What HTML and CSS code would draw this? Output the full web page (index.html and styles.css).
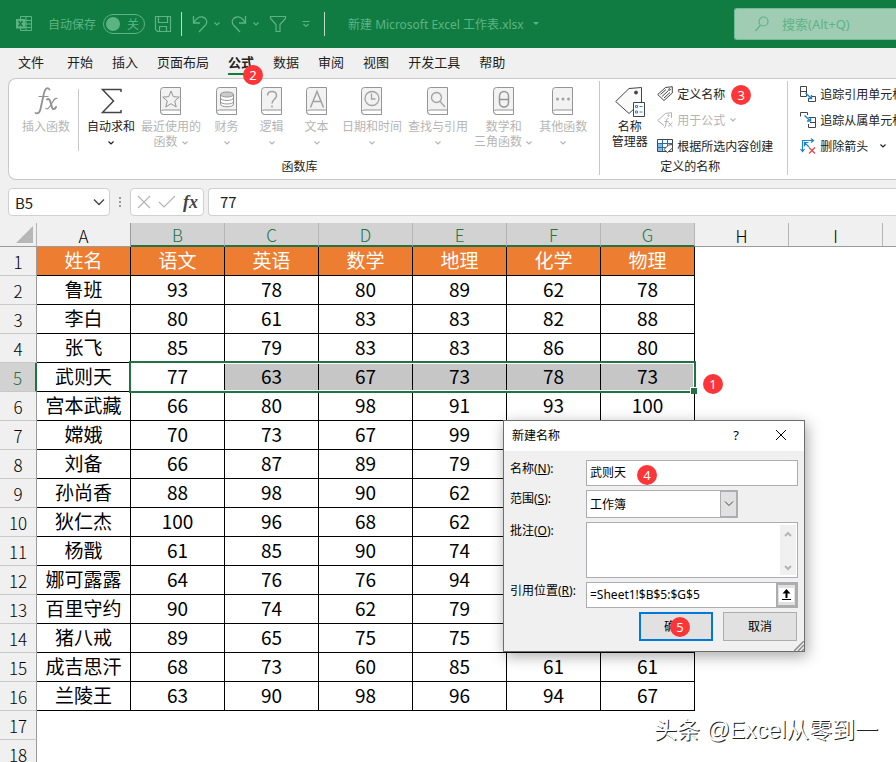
FILE: index.html
```html
<!DOCTYPE html>
<html lang="zh-CN">
<head>
    <meta charset="UTF-8">
    <meta name="viewport" content="width=device-width, initial-scale=1.0">
    <title>新建 Microsoft Excel 工作表.xlsx</title>
    <link rel="stylesheet" href="styles.css">
</head>
<body>
    <svg class="defs" aria-hidden="true">
        <symbol id="book" viewBox="0 0 22 28">
            <path d="M3.5.5h17v27h-17a3 3 0 0 1-3-3v-21a3 3 0 0 1 3-3z" fill="#f2f2f2" stroke="#959595"/>
            <path d="M.7 24.5a3 3 0 0 1 2.800-1.500h17v4.500h-17a3 3 0 0 1-2.800-3z" fill="#fff" stroke="#959595"/>
        </symbol>
        <symbol id="chevron" viewBox="0 0 8 6">
            <path d="M1.500 1.500 4 4l2.500-2.500" fill="none" stroke="currentColor" stroke-width="1.200"/>
        </symbol>
    </svg>

    <div class="app">
        <header class="titlebar">
            <svg class="app-icon" width="17" height="18" viewBox="0 0 17 18" fill="none" stroke="currentColor">
                <path d="M4.500 4V1.500h11v14h-11V13M10 1.500v14M4.500 5.500h11M9 9h6.500M4.500 12.500h11"/>
                <path d="M0 4h9v9.500H0z" fill="currentColor" stroke="none"/>
                <path d="M2.500 6l4 5.500M6.500 6l-4 5.500" stroke="#107c41" stroke-width="1.400"/>
            </svg>
            <span class="autosave">自动保存</span>
            <button class="toggle" aria-label="自动保存"><span class="knob"></span>关</button>
            <button class="tool save" aria-label="保存">
                <svg width="18" height="18" viewBox="0 0 18 18" fill="none" stroke="currentColor" stroke-width="1.200"><path d="M1.500 1.500h15v15H3.500l-2-2zM4.500 1.500v6h9v-6M5.500 16.500v-5h7v5"/></svg>
            </button>
            <span class="bar-line"></span>
            <button class="tool undo" aria-label="撤消">
                <svg width="16" height="18" viewBox="0 0 16 18" fill="none" stroke="currentColor" stroke-width="1.300"><path d="M1.500 1v7H8M2 7.500C4 4 7 1.500 10.500 2c4 .7 5.500 5 3 8L7 17"/></svg>
                <svg width="8" height="6"><use href="#chevron"/></svg>
            </button>
            <button class="tool redo" aria-label="恢复">
                <svg width="16" height="18" viewBox="0 0 16 18" fill="none" stroke="currentColor" stroke-width="1.300"><path d="M14.500 1v7H8M14 7.500C12 4 9 1.500 5.500 2c-4 .7-5.500 5-3 8L9 17"/></svg>
                <svg width="8" height="6"><use href="#chevron"/></svg>
            </button>
            <button class="tool filter" aria-label="筛选">
                <svg width="18" height="18" viewBox="0 0 18 18" fill="none" stroke="currentColor" stroke-width="1.200"><path d="M1.500 1.500h15v2L11 9.500v7H7v-7L1.500 3.500z"/></svg>
            </button>
            <button class="tool more" aria-label="自定义快速访问工具栏">
                <svg width="8" height="8" viewBox="0 0 8 8" fill="none" stroke="currentColor" stroke-width="1.200"><path d="M.5 1.500h7M1.500 4 4 6.500 6.500 4"/></svg>
            </button>
            <span class="bar-line"></span>
            <button class="doc-title">新建 Microsoft Excel 工作表.xlsx <svg width="6" height="4"><path d="M0 0h6L3 3z" fill="currentColor"/></svg></button>
            <label class="search">
                <svg width="14" height="16" viewBox="0 0 14 16" fill="none" stroke="currentColor" stroke-width="1.200"><circle cx="8.500" cy="5.500" r="4.500"/><path d="M5.500 9 .5 15"/></svg>
                <input type="text" placeholder="搜索(Alt+Q)" aria-label="搜索">
            </label>
        </header>

        <nav class="tabs">
            <a href="#" class="file">文件</a>
            <a href="#">开始</a>
            <a href="#">插入</a>
            <a href="#">页面布局</a>
            <a href="#" class="active">公式<span class="badge badge-2">2</span></a>
            <a href="#">数据</a>
            <a href="#">审阅</a>
            <a href="#">视图</a>
            <a href="#">开发工具</a>
            <a href="#">帮助</a>
        </nav>

        <section class="ribbon">
            <div class="group library-group">
                <div class="group-body">
                    <div class="insert">
                        <button class="big" disabled>
                            <svg class="icon" width="26" height="28" viewBox="0 0 26 28" fill="none" stroke="#929292" stroke-linecap="round">
                                <path d="M16.500 2.500C14.500-.2 12 1.500 11 6L7.500 22c-.8 3.500-2.500 5-5 4" stroke-width="1.800"/>
                                <path d="M6 9.500h9" stroke-width="1.200"/>
                                <path d="M14 12.500c4-3 4 9 6 9.500 1.200.3 2.500-1 3-2" stroke-width="2"/>
                                <path d="M24 11.500c-2-1-3 1-5 4.500s-4 7-6 5.500" stroke-width="1.200"/>
                            </svg>
                            <span>插入函数</span>
                        </button>
                    </div>
                    <button class="big">
                        <svg class="icon" width="22" height="28" viewBox="0 0 22 28" fill="none" stroke="#444" stroke-width="1.500"><path d="M21 5V2.500H2.500L13.500 14 2.500 25.500H21V23"/></svg>
                        <span>自动求和</span>
                        <span><svg width="8" height="6"><use href="#chevron"/></svg></span>
                    </button>
                    <button class="big" disabled>
                        <svg class="icon" width="22" height="28" fill="none" stroke="#959595"><use href="#book"/><path d="m11 4 2.300 5.700 6 .4-4.600 3.900 1.500 6L11 16.700 5.800 20l1.500-6-4.600-3.900 6-.4z"/></svg>
                        <span>最近使用的</span>
                        <span>函数 <svg width="8" height="6"><use href="#chevron"/></svg></span>
                    </button>
                    <button class="big" disabled>
                        <svg class="icon" width="22" height="28" stroke="#959595"><use href="#book"/><path d="M4.500 7v10c0 3.700 13 3.700 13 0V7" fill="#fff"/><ellipse cx="11" cy="7.500" rx="6.500" ry="2.500" fill="#ccc"/><path d="M4.500 11c0 3.300 13 3.300 13 0M4.500 14.500c0 3.300 13 3.300 13 0" fill="none"/></svg>
                        <span>财务</span>
                        <span><svg width="8" height="6"><use href="#chevron"/></svg></span>
                    </button>
                    <button class="big" disabled>
                        <svg class="icon" width="22" height="28" fill="none" stroke="#a2a2a2" stroke-width="1.500"><use href="#book" stroke-width="1"/><path d="M6.500 8.500C6.500 3 15.500 3 15.500 8.500c0 3.500-4.500 4-4.500 8"/><path d="M11 18.500v2"/></svg>
                        <span>逻辑</span>
                        <span><svg width="8" height="6"><use href="#chevron"/></svg></span>
                    </button>
                    <button class="big" disabled>
                        <svg class="icon" width="22" height="28" fill="none" stroke="#a2a2a2" stroke-width="1.500"><use href="#book" stroke-width="1"/><path d="M4.500 20.500 11 4.500l6.500 16M7 14.500h8"/></svg>
                        <span>文本</span>
                        <span><svg width="8" height="6"><use href="#chevron"/></svg></span>
                    </button>
                    <button class="big" disabled>
                        <svg class="icon" width="22" height="28" fill="none" stroke="#a2a2a2" stroke-width="1.300"><use href="#book" stroke-width="1"/><circle cx="11" cy="11.500" r="7"/><path d="M10.500 6.500v5.500h4"/></svg>
                        <span>日期和时间</span>
                        <span><svg width="8" height="6"><use href="#chevron"/></svg></span>
                    </button>
                    <button class="big" disabled>
                        <svg class="icon" width="22" height="28" fill="none" stroke="#a2a2a2" stroke-width="1.300"><use href="#book" stroke-width="1"/><circle cx="9.500" cy="10.500" r="5"/><path d="m13 14.500 5 5.500"/></svg>
                        <span>查找与引用</span>
                        <span><svg width="8" height="6"><use href="#chevron"/></svg></span>
                    </button>
                    <button class="big" disabled>
                        <svg class="icon" width="22" height="28" fill="none" stroke="#959595" stroke-width="1.500"><use href="#book" stroke-width="1"/><rect x="6.500" y="4.500" width="9" height="15.500" rx="4.500"/><path d="M6.500 12.500h9"/></svg>
                        <span>数学和</span>
                        <span>三角函数 <svg width="8" height="6"><use href="#chevron"/></svg></span>
                    </button>
                    <button class="big" disabled>
                        <svg class="icon" width="22" height="28" fill="#a2a2a2"><use href="#book"/><circle cx="5.500" cy="12" r="1.500"/><circle cx="11" cy="12" r="1.500"/><circle cx="16.500" cy="12" r="1.500"/></svg>
                        <span>其他函数</span>
                        <span><svg width="8" height="6"><use href="#chevron"/></svg></span>
                    </button>
                </div>
                <div class="caption">函数库</div>
            </div>
            <div class="group names-group">
                <div class="group-body">
                    <button class="big manager">
                        <svg class="icon" width="30" height="30" viewBox="0 0 30 30" fill="#fafafa" stroke="#444">
                            <path d="M.7 14.500 14 1.500 26.500.5V15L14 26.500z"/><circle cx="21" cy="5.500" r="1.500" fill="#444"/>
                            <path d="M18.500 15.500h11v14h-11z" fill="#fff"/><path d="M20.500 18.500h2v2h-2zM20.500 24h2v2h-2z" stroke="#2b88d8"/><path d="M24.500 19.500h3M24.500 25h3" stroke="#2b88d8"/>
                        </svg>
                        <span>名称</span>
                        <span>管理器</span>
                    </button>
                    <div class="rows">
                        <button class="small">
                            <svg width="16" height="16" viewBox="0 0 16 16" fill="none" stroke="#444"><path d="M.7 8.500 8.500 1.500 15.300.7V7L7 14.500z"/><circle cx="12.500" cy="3.500" r=".8"/><path d="m3.500 8.500 5.500-5M5 10.500l6.500-6M7 12l6-5.500"/></svg>
                            定义名称<span class="badge badge-3">3</span>
                        </button>
                        <button class="small" disabled>
                            <svg width="16" height="16" viewBox="0 0 16 16" fill="none" stroke="#b0b0b0"><path d="M7 13.500.7 8.500 8.500 1.500 14.500.7V6"/><circle cx="11.500" cy="3.500" r=".7"/><path d="M11.500 6.500c-1.500-.5-2 1-2.200 3L8.500 14c-.2 1-.7 1.700-1.500 1.500M7.500 9.500h4M11.500 10.500l3.500 4M15.500 10.500l-4.500 4"/></svg>
                            用于公式 <svg width="8" height="6"><use href="#chevron"/></svg>
                        </button>
                        <button class="small">
                            <svg width="16" height="16" viewBox="0 0 16 16" fill="#fff" stroke="#444"><path d="M.5 1.500h15v12H.5z"/><path d="M1 5h4v8H1z" fill="#83beec" stroke="none"/><path d="M.5 5.500h15M5.500 1.500v12M10.500 1.500v8" stroke="#2b6aa8"/><path d="M.5 9.500h9" stroke="#2b6aa8"/><path d="m7 11.500 4.500-4.500 4-.5v3.500l-5 4.500z"/></svg>
                            根据所选内容创建
                        </button>
                    </div>
                </div>
                <div class="caption">定义的名称</div>
            </div>
            <div class="group audit-group">
                <div class="rows">
                    <button class="small">
                        <svg width="16" height="16" viewBox="0 0 16 16" fill="none" stroke="#444"><path d="M.5.5h6v10h-6zM.5 5.500h6M11 10.500h4.500v5h-7V13"/><path d="m5.500 7 6 5.500M11.500 9v3.500H8" stroke="#1e82d2" stroke-width="1.400"/></svg>
                        追踪引用单元格
                    </button>
                    <button class="small">
                        <svg width="16" height="16" viewBox="0 0 16 16" fill="none" stroke="#444"><path d="M.5 4.500v-4h7V3M8.500 5.500h7v10h-7V12M10 10.500h5.500"/><path d="m4.500 3.500 6 5.500M10.500 5.500V9H7" stroke="#1e82d2" stroke-width="1.400"/></svg>
                        追踪从属单元格
                    </button>
                    <button class="small">
                        <svg width="16" height="16" viewBox="0 0 16 16" fill="none" stroke="#1e82d2" stroke-width="1.200"><path d="M2.500 13V2.500H13M11 .5l2.500 2L11 4.500M.5 11l2 2.500 2-2.500M4 4l5 5M4.500 8.500V4.500h4"/><path d="m9 9.500 6 6M15 9.500l-6 6" stroke="#e8434a"/></svg>
                        删除箭头<svg class="far" width="8" height="6"><use href="#chevron"/></svg>
                    </button>
                </div>
            </div>
        </section>

        <div class="formula-bar">
            <div class="name-box">
                <input type="text" value="B5" aria-label="名称框">
                <button aria-label="展开名称框"><svg width="12" height="8" fill="none" stroke="#444" stroke-width="1.300"><path d="m1 1.500 5 5 5-5"/></svg></button>
            </div>
            <span class="dots"></span>
            <div class="fx-box">
                <button aria-label="取消"><svg width="14" height="14" stroke="#b5b5b5" stroke-width="1.200"><path d="m1 1 12 12M13 1 1 13"/></svg></button>
                <button aria-label="输入"><svg width="18" height="14" fill="none" stroke="#b5b5b5" stroke-width="1.200"><path d="m1 7 5 5L17 1"/></svg></button>
                <button class="fx" aria-label="插入函数">fx</button>
            </div>
            <input class="formula" type="text" value="77" aria-label="编辑栏">
        </div>

        <main class="sheet">
            <table>
                <colgroup>
                    <col class="col-head"><col class="col"><col class="col"><col class="col"><col class="col"><col class="col"><col class="col"><col class="col"><col class="col"><col class="col"><col>
                </colgroup>
                <thead>
                    <tr><th class="corner"><svg width="17" height="17"><path d="M17 0v17H0z" fill="#b7b7b7"/></svg></th><th>A</th><th class="on">B</th><th class="on">C</th><th class="on">D</th><th class="on">E</th><th class="on">F</th><th class="on">G</th><th>H</th><th>I</th><th></th></tr>
                </thead>
                <tbody class="data">
                    <tr class="fields"><th>1</th><td>姓名</td><td>语文</td><td>英语</td><td>数学</td><td>地理</td><td>化学</td><td>物理</td></tr>
                    <tr><th>2</th><td>鲁班</td><td>93</td><td>78</td><td>80</td><td>89</td><td>62</td><td>78</td></tr>
                    <tr><th>3</th><td>李白</td><td>80</td><td>61</td><td>83</td><td>83</td><td>82</td><td>88</td></tr>
                    <tr><th>4</th><td>张飞</td><td>85</td><td>79</td><td>83</td><td>83</td><td>86</td><td>80</td></tr>
                    <tr class="selected"><th>5</th><td>武则天</td><td class="origin">77<span class="selection"></span></td><td class="in">63</td><td class="in">67</td><td class="in">73</td><td class="in">78</td><td class="in last">73<span class="badge badge-1">1</span></td></tr>
                    <tr><th>6</th><td>宫本武藏</td><td>66</td><td>80</td><td>98</td><td>91</td><td>93</td><td>100</td></tr>
                    <tr><th>7</th><td>嫦娥</td><td>70</td><td>73</td><td>67</td><td>99</td><td></td><td></td></tr>
                    <tr><th>8</th><td>刘备</td><td>66</td><td>87</td><td>89</td><td>79</td><td></td><td></td></tr>
                    <tr><th>9</th><td>孙尚香</td><td>88</td><td>98</td><td>90</td><td>62</td><td></td><td></td></tr>
                    <tr><th>10</th><td>狄仁杰</td><td>100</td><td>96</td><td>68</td><td>62</td><td></td><td></td></tr>
                    <tr><th>11</th><td>杨戬</td><td>61</td><td>85</td><td>90</td><td>74</td><td></td><td></td></tr>
                    <tr><th>12</th><td>娜可露露</td><td>64</td><td>76</td><td>76</td><td>94</td><td></td><td></td></tr>
                    <tr><th>13</th><td>百里守约</td><td>90</td><td>74</td><td>62</td><td>79</td><td></td><td></td></tr>
                    <tr><th>14</th><td>猪八戒</td><td>89</td><td>65</td><td>75</td><td>75</td><td></td><td></td></tr>
                    <tr><th>15</th><td>成吉思汗</td><td>68</td><td>73</td><td>60</td><td>85</td><td>61</td><td>61</td></tr>
                    <tr><th>16</th><td>兰陵王</td><td>63</td><td>90</td><td>98</td><td>96</td><td>94</td><td>67</td></tr>
                </tbody>
                <tbody>
                    <tr><th>17</th></tr>
                    <tr><th>18</th></tr>
                </tbody>
            </table>
        </main>

        <form class="dialog" role="dialog" aria-labelledby="dialog-title">
            <div class="dialog-head">
                <span id="dialog-title">新建名称</span>
                <button type="button" class="help" aria-label="帮助">?</button>
                <button type="button" class="close" aria-label="关闭"><svg width="12" height="12" stroke="#000"><path d="m1 1 10 10M11 1 1 11"/></svg></button>
            </div>
            <div class="dialog-body">
                <label for="name">名称(<u>N</u>):</label>
                <div class="field">
                    <input id="name" type="text" value="武则天">
                    <span class="badge badge-4">4</span>
                </div>
                <label for="scope">范围(<u>S</u>):</label>
                <div class="field scope">
                    <select id="scope"><option>工作簿</option></select>
                    <span class="drop"><svg width="10" height="6" fill="none" stroke="#444"><path d="m1 .5 4 4 4-4"/></svg></span>
                </div>
                <label for="comment">批注(<u>O</u>):</label>
                <div class="field">
                    <textarea id="comment"></textarea>
                    <span class="scroll">
                        <svg width="8" height="6" fill="none" stroke="#b5b5b5" stroke-width="2"><path d="m1 5 3-3 3 3"/></svg>
                        <svg width="8" height="6" fill="none" stroke="#b5b5b5" stroke-width="2"><path d="m1 1 3 3 3-3"/></svg>
                    </span>
                </div>
                <label for="refers">引用位置(<u>R</u>):</label>
                <div class="field refers">
                    <input id="refers" type="text" value="=Sheet1!$B$5:$G$5">
                    <button type="button" aria-label="折叠对话框"><svg width="15" height="14"><path d="M0 0h15v14H0z" fill="#fff"/><path d="M7.500 1 11.500 5.500h-8zM6.500 5h2v5h-2zM3 11h9v1H3z"/></svg></button>
                </div>
                <div class="actions">
                    <button type="submit" class="ok">确定<span class="badge badge-5">5</span></button>
                    <button type="button">取消</button>
                </div>
            </div>
            <svg class="grip" width="10" height="10" stroke="#8c8c8c" stroke-width="1.500"><path d="M0 10 10 0M4 10l6-6M8 10l2-2"/></svg>
        </form>

        <div class="watermark">头条 @Excel从零到一</div>
    </div>
</body>
</html>
```
FILE: styles.css
```css
:root {
    --green: #107c41;
    --select-green: #217346;
    --faded: #5cb485;
    --panel: #f0f0f0;
    --line: #c8c8c8;
    --disabled: #b5b5b5;
    --ui-font: "Noto Sans", "Noto Sans CJK SC", sans-serif;
    --cell-font: "Noto Sans CJK SC", sans-serif;
}

* {
    box-sizing: border-box;
}

body {
    margin: 0;
    font-family: var(--ui-font);
    font-size: 12px;
    line-height: 15px;
    color: #222;
    background-color: #fff;
}

button,
input,
select,
textarea {
    font: inherit;
    color: inherit;
    margin: 0;
    padding: 0;
    border: none;
    border-radius: 0;
    background: none;
    outline: none;
}

button {
    flex-shrink: 0;
    white-space: nowrap;
}

svg {
    flex-shrink: 0;
}

.defs {
    position: absolute;
    width: 0;
    height: 0;
}

.app {
    position: relative;
    display: flex;
    flex-direction: column;
    height: 100vh;
    overflow: hidden;
    background-color: var(--panel);
}

/* Title bar */
.titlebar {
    display: flex;
    align-items: center;
    flex-shrink: 0;
    height: 48px;
    padding-left: 16px;
    background-color: var(--green);
    color: var(--faded);
}

.autosave {
    margin-left: 15px;
    white-space: nowrap;
}

.toggle {
    display: flex;
    align-items: center;
    gap: 7px;
    width: 42px;
    height: 20px;
    margin-left: 7px;
    padding-left: 2px;
    border: 1px solid var(--faded);
    border-radius: 10px;
}

.knob {
    width: 14px;
    height: 14px;
    border-radius: 50%;
    background-color: var(--faded);
}

.tool {
    display: flex;
    align-items: center;
    gap: 5px;
    margin-left: 9px;
}

.bar-line {
    flex-shrink: 0;
    width: 1px;
    height: 24px;
    margin-left: 9px;
    background-color: #b5dcc6;
}

.more {
    margin-left: 15px;
}

.more + .bar-line {
    margin-left: 14px;
}

.undo,
.redo {
    margin-left: 10px;
}

.doc-title {
    display: flex;
    align-items: center;
    gap: 9px;
    margin-left: 23px;
}

.search {
    display: flex;
    align-items: center;
    gap: 13px;
    flex: 0 0 162px;
    min-width: 0;
    height: 32px;
    margin-left: auto;
    padding-left: 20px;
    border: 1px solid #6fbe93;
    border-right: none;
    border-radius: 3px 0 0 3px;
    background-color: #a0ccb3;
    font-size: 13px;
}

.search input {
    flex: 1;
    min-width: 0;
}

.search input::placeholder {
    color: var(--faded);
    opacity: 1;
}

/* Tabs */
.tabs {
    display: flex;
    flex-shrink: 0;
    gap: 19px;
    height: 30px;
    padding: 4px 18px 0;
    font-size: 13px;
    line-height: 20px;
}

.tabs a {
    position: relative;
    color: #222;
    text-decoration: none;
    white-space: nowrap;
}

.tabs .file {
    margin-right: 4px;
}

.tabs .active {
    height: 23px;
    border-bottom: 2px solid var(--green);
    font-weight: bold;
}

.badge {
    position: absolute;
    z-index: 5;
    width: 20px;
    height: 20px;
    border-radius: 50%;
    background-color: #fc3638;
    color: #fff;
    font-family: var(--ui-font);
    font-size: 13px;
    font-weight: normal;
    line-height: 20px;
    text-align: center;
}

.badge-1 {
    left: 102px;
    top: 11px;
}

.badge-2 {
    left: 15px;
    top: 13px;
}

.badge-3 {
    right: -22px;
    top: 4px;
}

.badge-4 {
    left: 50px;
    top: 4px;
}

.badge-5 {
    left: 29px;
    top: 3px;
}

/* Ribbon */
.ribbon {
    display: flex;
    flex-shrink: 0;
    margin-left: 8px;
    padding: 2px 0 4px;
    border: 1px solid var(--line);
    border-right: none;
    border-radius: 8px 0 0 8px;
    background-color: #fff;
    overflow: hidden;
}

.group {
    flex-shrink: 0;
    border-right: 1px solid var(--line);
}

.group-body {
    display: flex;
    height: 78px;
}

.caption {
    line-height: 16px;
    text-align: center;
}

.insert {
    align-self: flex-start;
    height: 70px;
    margin-right: 5px;
    padding: 0 6px 0 10px;
    background: linear-gradient(var(--line), var(--line)) right bottom / 1px 62px no-repeat;
}

.library-group {
    padding-right: 9px;
}

.big {
    display: flex;
    flex-direction: column;
    align-items: center;
    min-width: 45px;
    padding: 6px 3px 0;
}

.big .icon {
    margin-bottom: 4px;
}

.big span {
    height: 15px;
}

.big span svg {
    vertical-align: middle;
}

button:disabled {
    color: var(--disabled);
}

.names-group {
    padding: 0 14px 0 7px;
}

.manager .icon {
    margin-bottom: 2px;
}

.rows {
    display: flex;
    flex-direction: column;
    align-items: flex-start;
    margin-left: 5px;
}

.small {
    position: relative;
    display: flex;
    align-items: center;
    gap: 4px;
    height: 26px;
}

.audit-group {
    padding-left: 7px;
    border-right: none;
}

.far {
    margin-left: 7px;
}

/* Formula bar */
.formula-bar {
    display: flex;
    flex-shrink: 0;
    height: 28px;
    margin: 8px 0 7px 8px;
    font-family: var(--cell-font);
    font-size: 15px;
}

.name-box,
.fx-box,
.formula {
    border: 1px solid #d0d0d0;
    border-radius: 4px;
    background-color: #fff;
}

.name-box {
    display: flex;
    align-items: center;
    width: 102px;
    padding: 0 4px 0 6px;
}

.name-box input {
    flex: 1;
    min-width: 0;
}

.name-box button {
    display: flex;
}

.dots {
    width: 2px;
    height: 10px;
    margin: 9px 9px 0;
    background: repeating-linear-gradient(#999 0 2px, transparent 2px 4px);
}

.fx-box {
    display: flex;
    align-items: center;
    justify-content: space-between;
    width: 74px;
    padding: 0 5px 0 6px;
}

.fx-box button {
    display: flex;
}

.fx-box .fx {
    font-family: "Liberation Serif", serif;
    font-size: 18px;
    font-style: italic;
    font-weight: bold;
    color: #444;
}

.formula {
    flex: 1;
    min-width: 0;
    margin-left: 4px;
    padding: 0 0 2px 11px;
    border-right: none;
    border-radius: 4px 0 0 4px;
}

/* Sheet */
.sheet {
    flex: 1;
    min-height: 0;
    overflow: hidden;
    background-color: #fff;
}

table {
    width: 100%;
    table-layout: fixed;
    border-collapse: separate;
    border-spacing: 0;
    font-family: var(--cell-font);
    font-size: 19px;
    line-height: 20px;
    color: #000;
}

.col-head {
    width: 37px;
}

.col {
    width: 94px;
}

th,
td {
    height: 29px;
    padding: 0;
    text-align: center;
    vertical-align: middle;
}

th {
    padding-top: 2px;
    border-right: 1px solid #9b9b9b;
    border-bottom: 1px solid var(--line);
    background-color: var(--panel);
    font-size: 17px;
    font-weight: 300;
}

thead th {
    height: 24px;
    border-right-color: #b5b5b5;
    border-bottom-color: #9b9b9b;
}

thead th:nth-child(2) {
    border-right-color: #9b9b9b;
}

thead th:last-child {
    border-right: none;
}

thead .corner {
    padding: 0 3px 0 0;
    line-height: 0;
    text-align: right;
}

thead .on,
.selected th {
    background-color: #d2d2d2;
    color: var(--select-green);
}

thead .on {
    border-bottom: 2px solid var(--select-green);
}

.selected th {
    border-right: 2px solid var(--select-green);
}

.data td {
    padding-bottom: 2px;
    border-right: 1px solid #000;
    border-bottom: 1px solid #000;
    background-color: #fff;
}

.data .fields td {
    background-color: #ed7d31;
    color: #fff;
}

.data .in {
    background-color: #c6c6c6;
}

.origin,
.last {
    position: relative;
}

.selection {
    position: absolute;
    z-index: 2;
    top: -2px;
    bottom: -2px;
    left: -2px;
    width: calc(600% + 9px);
    border: 2px solid var(--select-green);
    box-shadow: inset 0 0 0 1px #fff;
}

.selection::after {
    content: "";
    position: absolute;
    right: -3px;
    bottom: -3px;
    width: 6px;
    height: 6px;
    border-top: 1px solid #fff;
    border-left: 1px solid #fff;
    background-color: var(--select-green);
}

/* New name dialog */
.dialog {
    position: absolute;
    z-index: 10;
    top: 420px;
    left: 503px;
    width: 302px;
    border: 1px solid #6e6e6e;
    background-color: var(--panel);
    box-shadow: 2px 4px 14px rgba(0, 0, 0, 0.35);
    color: #000;
}

.dialog-head {
    display: flex;
    align-items: center;
    height: 30px;
    padding: 0 17px 2px 8px;
    background-color: #fff;
}

.help {
    margin-left: auto;
    font-size: 13px;
}

.close {
    display: flex;
    margin-left: 36px;
}

.dialog-body {
    display: grid;
    grid-template-columns: 76px 1fr;
    row-gap: 4px;
    padding: 9px 6px 10px;
}

.dialog-body label {
    padding-top: 1px;
    white-space: nowrap;
}

.field {
    position: relative;
    display: flex;
    border: 1px solid #abadb3;
    background-color: #fff;
}

.field input {
    flex: 1;
    min-width: 0;
    height: 24px;
    padding: 0 3px 2px;
}

.scope {
    width: 152px;
    height: 28px;
}

.scope select {
    flex: 1;
    padding-left: 3px;
    appearance: none;
}

.drop {
    position: absolute;
    top: 0;
    right: 0;
    bottom: 0;
    display: flex;
    align-items: center;
    justify-content: center;
    width: 17px;
    border: 1px solid #adadad;
    background-color: #e1e1e1;
    pointer-events: none;
}

.field textarea {
    flex: 1;
    height: 54px;
    padding: 3px;
    resize: none;
}

.scroll {
    display: flex;
    flex-direction: column;
    align-items: center;
    justify-content: space-between;
    width: 16px;
    margin: 2px 1px;
    padding: 6px 0 4px;
    background-color: var(--panel);
}

.refers button {
    display: flex;
    align-items: center;
    justify-content: center;
    width: 21px;
    border: 2px solid #adadad;
    background-color: #e1e1e1;
}

.actions {
    grid-column: 1 / -1;
    display: flex;
    justify-content: flex-end;
    gap: 10px;
    padding-right: 1px;
}

.actions button {
    position: relative;
    width: 74px;
    height: 29px;
    border: 1px solid #adadad;
    background-color: #e1e1e1;
}

.actions .ok {
    border: 2px solid #0078d7;
}

.grip {
    position: absolute;
    right: 0;
    bottom: 0;
}

.watermark {
    position: absolute;
    right: 18px;
    bottom: 16px;
    font-family: "Liberation Sans", "Noto Sans CJK SC", sans-serif;
    font-size: 23px;
    line-height: 32px;
    color: #fff;
    text-shadow: 1px 1px 0 #222;
    white-space: nowrap;
}
```
